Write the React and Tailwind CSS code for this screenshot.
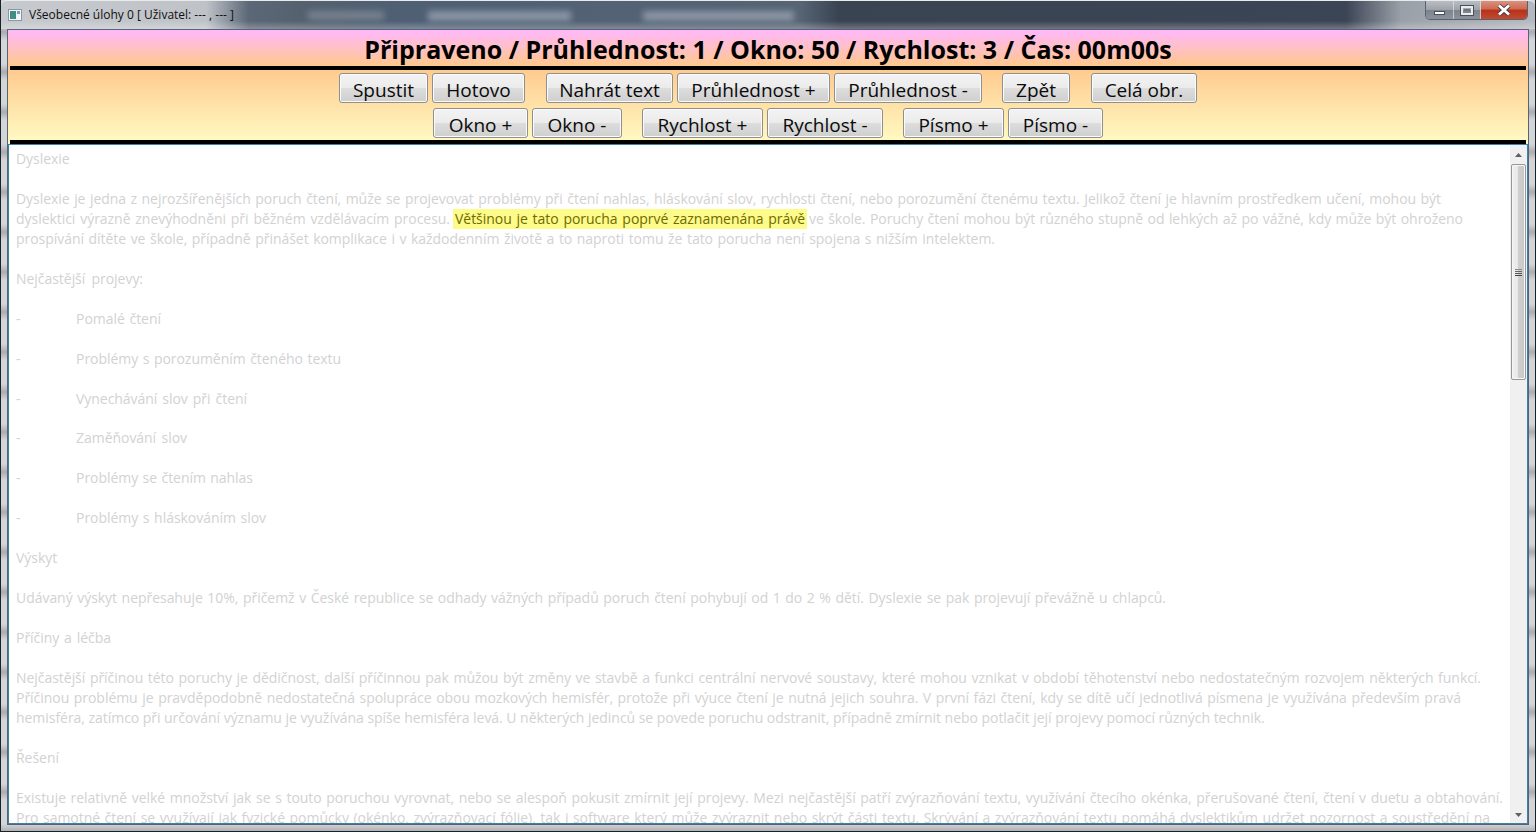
const seg = '"Open Sans","Noto Sans",sans-serif';
function Btn({ w, ml, children }) {
  return <button className={`h-[30px] shrink-0 rounded-[3px] border border-[#8e8f8f] bg-[linear-gradient(#f3f3f3_0%,#ebebeb_50%,#dddddd_50%,#cfcfcf_100%)] pt-[3px] text-[19px] leading-[26px] text-[#0a0a0a] shadow-[inset_0_0_0_1px_#fbfbfb] ${w} ${ml || ''}`}>{children}</button>;
}
function L({ w, children, cls }) {
  return <div className={`h-[19.97px] overflow-visible whitespace-nowrap [text-align-last:justify] ${cls || ''}`} style={{ width: w }}>{children}</div>;
}
function Blank() { return <div className="h-[19.97px]" />; }
function Dash({ w, children }) {
  return <div className="flex h-[19.97px] whitespace-nowrap"><span className="w-[60px]">-</span><span className="[text-align-last:justify]" style={{ width: w }}>{children}</span></div>;
}
export default function App() {
  return (
    <div className="relative flex h-[832px] w-[1536px] flex-col overflow-hidden border-x border-b border-[#1c2026] bg-[repeating-linear-gradient(#d3d6d9_0px,#d3d6d9_24px,#a9acb0_32px,#d3d6d9_40px)]" style={{ fontFamily: seg }}>
      <div className="relative flex h-[29px] shrink-0 items-center overflow-hidden rounded-t-[6px] border-t border-[#e8eaec] bg-[linear-gradient(90deg,#c6c9cd_0px,#bfc3c8_205px,#5b6776_248px,#55616f_300px,#4f5f74_400px,#566474_800px,#3a4352_838px,#3c4555_1345px,#9aa0a8_1400px,#b6bac0_1535px)] pl-[7px]">
        <div className="pointer-events-none absolute inset-x-0 bottom-0 h-[8px] bg-[linear-gradient(transparent,#ffffff44)]" />
        <div className="absolute left-[307px] top-[10px] h-[9px] w-[76px] bg-[#76818f] blur-[3px]" />
        <div className="absolute left-[427px] top-[10px] h-[10px] w-[143px] bg-[#8a95a5] blur-[3px]" />
        <div className="absolute left-[642px] top-[10px] h-[10px] w-[151px] bg-[#8a95a5] blur-[3px]" />
        <svg className="relative mr-[7px]" width="14" height="14" viewBox="0 0 14 14">
          <rect x="0.5" y="1.5" width="13" height="11" fill="#f4f6f8" stroke="#8f969e" />
          <rect x="2" y="3" width="6" height="8" fill="#3f8f86" />
          <rect x="9" y="3" width="3" height="3" fill="#6fa0c8" />
        </svg>
        <span className="relative whitespace-nowrap text-[12px] text-[#101010]">Všeobecné úlohy 0 [ Uživatel: --- , --- ]</span>
        <div className="absolute right-[7px] top-0 flex h-[19px] w-[103px] overflow-hidden rounded-b-[5px] border border-t-0 border-[#59616c] text-white">
          <div className="flex w-[28px] items-end justify-center border-r border-[#e4e6e8aa] bg-[linear-gradient(#b9bdc3,#9da2aa_50%,#7d838c_50%,#8c929a)] pb-[4px]"><div className="h-[4px] w-[11px] border border-[#4a505a] bg-white" /></div>
          <div className="flex w-[27px] items-center justify-center border-r border-[#e4e6e8aa] bg-[linear-gradient(#b9bdc3,#9da2aa_50%,#7d838c_50%,#8c929a)]"><div className="flex h-[9px] w-[12px] items-center justify-center border-2 border-[#e8eaec] outline outline-1 outline-[#4a505a]"><div className="h-[2px] w-[6px] bg-[#6d737c]" /></div></div>
          <div className="flex flex-1 items-center justify-center bg-[linear-gradient(#dd9080,#cc6a50_45%,#b8321a_50%,#c04a30)]">
            <svg width="14" height="12" viewBox="0 0 14 12"><path d="M2 1.5 L12 10.5 M12 1.5 L2 10.5" stroke="#3f3f46" strokeWidth="4.4" /><path d="M2 1.5 L12 10.5 M12 1.5 L2 10.5" stroke="#fff" strokeWidth="2.8" /></svg>
          </div>
        </div>
      </div>
      <div className="mx-[6px] mb-[6px] flex min-h-0 flex-1 flex-col border border-[#5a6470] bg-white">
        <div className="h-[36px] shrink-0 bg-[linear-gradient(#ffb8fc,#ffc88c)] text-center">
          <div className="text-[25px] font-bold leading-[38px] text-black">Připraveno / Průhlednost: 1 / Okno: 50 / Rychlost: 3 / Čas: 00m00s</div>
        </div>
        <div className="shrink-0 bg-[linear-gradient(#ffc88c,#fffcc4)]">
          <div className="mx-[2px] h-[4px] bg-black" />
          <div className="flex h-[70px] flex-col items-center gap-[5px] pt-[3px]">
            <div className="flex gap-[4px]">
              <Btn w="w-[89px]">Spustit</Btn>
              <Btn w="w-[93px]">Hotovo</Btn>
              <Btn w="w-[127px]" ml="ml-[17px]">Nahrát text</Btn>
              <Btn w="w-[153px]">Průhlednost +</Btn>
              <Btn w="w-[148px]">Průhlednost -</Btn>
              <Btn w="w-[68px]" ml="ml-[16px]">Zpět</Btn>
              <Btn w="w-[106px]" ml="ml-[17px]">Celá obr.</Btn>
            </div>
            <div className="flex gap-[4px]">
              <Btn w="w-[95px]">Okno +</Btn>
              <Btn w="w-[90px]">Okno -</Btn>
              <Btn w="w-[121px]" ml="ml-[16px]">Rychlost +</Btn>
              <Btn w="w-[116px]">Rychlost -</Btn>
              <Btn w="w-[101px]" ml="ml-[16px]">Písmo +</Btn>
              <Btn w="w-[95px]">Písmo -</Btn>
            </div>
          </div>
          <div className="mx-[2px] h-[4px] bg-black" />
        </div>
        <div className="flex min-h-0 flex-1 border border-[#3f7fa8] bg-white">
          <div className="min-w-0 flex-1 overflow-hidden pl-[7px] pt-[3.9px] text-[14px] leading-[19.97px] tracking-[-0.04px] text-[#d2d2d2]">
            <L w={54}>Dyslexie</L>
            <Blank />
            <L w={1425}>Dyslexie je jedna z nejrozšířenějších poruch čtení, může se projevovat problémy při čtení nahlas, hláskování slov, rychlosti čtení, nebo porozumění čtenému textu. Jelikož čtení je hlavním prostředkem učení, mohou být</L>
            <div className="flex h-[19.97px] whitespace-nowrap">
              <span className="w-[434px] [text-align-last:justify]">dyslektici výrazně znevýhodněni při běžném vzdělávacím procesu.</span>
              <span className="ml-[3px] h-[20px] w-[354px] bg-[#fdfb8a] px-[2px] text-[#6f6a00] [text-align-last:justify]">Většinou je tato porucha poprvé zaznamenána právě</span>
              <span className="ml-[2px] w-[654px] [text-align-last:justify]">ve škole. Poruchy čtení mohou být různého stupně od lehkých až po vážné, kdy může být ohroženo</span>
            </div>
            <L w={979}>prospívání dítěte ve škole, případně přinášet komplikace i v každodenním životě a to naproti tomu že tato porucha není spojena s nižším intelektem.</L>
            <Blank />
            <L w={127}>Nejčastější projevy:</L>
            <Blank />
            <Dash w={85}>Pomalé čtení</Dash>
            <Blank />
            <Dash w={265}>Problémy s porozuměním čteného textu</Dash>
            <Blank />
            <Dash w={171}>Vynechávání slov při čtení</Dash>
            <Blank />
            <Dash w={111}>Zaměňování slov</Dash>
            <Blank />
            <Dash w={177}>Problémy se čtením nahlas</Dash>
            <Blank />
            <Dash w={190}>Problémy s hláskováním slov</Dash>
            <Blank />
            <L w={43}>Výskyt</L>
            <Blank />
            <L w={1150}>Udávaný výskyt nepřesahuje 10%, přičemž v České republice se odhady vážných případů poruch čtení pohybují od 1 do 2 % dětí. Dyslexie se pak projevují převážně u chlapců.</L>
            <Blank />
            <L w={95}>Příčiny a léčba</L>
            <Blank />
            <L w={1465}>Nejčastější příčinou této poruchy je dědičnost, další příčinnou pak můžou být změny ve stavbě a funkci centrální nervové soustavy, které mohou vznikat v období těhotenství nebo nedostatečným rozvojem některých funkcí.</L>
            <L w={1445}>Příčinou problému je pravděpodobně nedostatečná spolupráce obou mozkových hemisfér, protože při výuce čtení je nutná jejich souhra. V první fázi čtení, kdy se dítě učí jednotlivá písmena je využívána především pravá</L>
            <L w={1243}>hemisféra, zatímco při určování významu je využívána spíše hemisféra levá. U některých jedinců se povede poruchu odstranit, případně zmírnit nebo potlačit její projevy pomocí různých technik.</L>
            <Blank />
            <L w={43}>Řešení</L>
            <Blank />
            <L w={1487}>Existuje relativně velké množství jak se s touto poruchou vyrovnat, nebo se alespoň pokusit zmírnit její projevy. Mezi nejčastější patří zvýrazňování textu, využívání čtecího okénka, přerušované čtení,  čtení v duetu a obtahování.</L>
            <L w={1474}>Pro samotné čtení se využívají jak fyzické pomůcky (okénko, zvýrazňovací fólie), tak i software který může zvýraznit nebo skrýt části textu. Skrývání a zvýrazňování textu pomáhá dyslektikům udržet pozornost a soustředění na</L>
          </div>
          <div className="flex w-[17px] shrink-0 flex-col items-center bg-[#f0f0f0]">
            <div className="flex h-[19px] w-full items-center justify-center">
              <svg width="7" height="4" viewBox="0 0 7 4"><path d="M3.5 0 L7 4 L0 4 Z" fill="#606060" /></svg>
            </div>
            <div className="flex h-[216px] w-[15px] items-center justify-center rounded-[2px] border border-[#979797] bg-[linear-gradient(90deg,#f1f1f1,#e6e6e6_50%,#cfcfcf_50%,#c8c8c8)] shadow-[inset_0_0_0_1px_#f6f6f6]">
              <div className="flex w-[7px] flex-col gap-[1px]">
                <div className="h-[1px] bg-[#888]" /><div className="h-[1px] bg-[#666]" /><div className="h-[1px] bg-[#555]" /><div className="h-[1px] bg-[#444]" />
              </div>
            </div>
            <div className="flex-1" />
            <div className="flex h-[17px] w-full items-center justify-center">
              <svg width="7" height="4" viewBox="0 0 7 4"><path d="M0 0 L7 0 L3.5 4 Z" fill="#606060" /></svg>
            </div>
          </div>
        </div>
      </div>
    </div>
  );
}
